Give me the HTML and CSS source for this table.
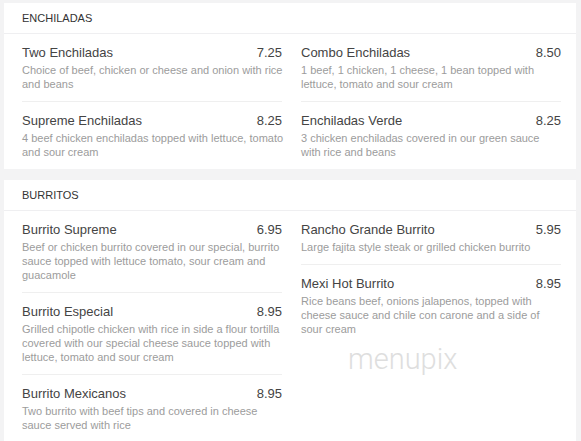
FILE: index.html
```html
<!DOCTYPE html>
<html>
<head>
<meta charset="utf-8">
<link rel="stylesheet" href="styles.css">
</head>
<body>
<div class="page">
  <section class="card">
    <div class="card-head">ENCHILADAS</div>
    <div class="cols">
      <div class="col col-left">
        <div class="item">
          <div class="row"><span class="name">Two Enchiladas</span><span class="price">7.25</span></div>
          <div class="desc">Choice of beef, chicken or cheese and onion with rice and beans</div>
        </div>
        <div class="item">
          <div class="row"><span class="name">Supreme Enchiladas</span><span class="price">8.25</span></div>
          <div class="desc">4 beef chicken enchiladas topped with lettuce, tomato and sour cream</div>
        </div>
      </div>
      <div class="col">
        <div class="item">
          <div class="row"><span class="name">Combo Enchiladas</span><span class="price">8.50</span></div>
          <div class="desc">1 beef, 1 chicken, 1 cheese, 1 bean topped with lettuce, tomato and sour cream</div>
        </div>
        <div class="item">
          <div class="row"><span class="name">Enchiladas Verde</span><span class="price">8.25</span></div>
          <div class="desc">3 chicken enchiladas covered in our green sauce with rice and beans</div>
        </div>
      </div>
    </div>
  </section>
  <section class="card card-last">
    <div class="card-head">BURRITOS</div>
    <div class="cols">
      <div class="col col-left">
        <div class="item">
          <div class="row"><span class="name">Burrito Supreme</span><span class="price">6.95</span></div>
          <div class="desc">Beef or chicken burrito covered in our special, burrito sauce topped with lettuce tomato, sour cream and guacamole</div>
        </div>
        <div class="item">
          <div class="row"><span class="name">Burrito Especial</span><span class="price">8.95</span></div>
          <div class="desc">Grilled chipotle chicken with rice in side a flour tortilla covered with our special cheese sauce topped with lettuce, tomato and sour cream</div>
        </div>
        <div class="item">
          <div class="row"><span class="name">Burrito Mexicanos</span><span class="price">8.95</span></div>
          <div class="desc">Two burrito with beef tips and covered in cheese sauce served with rice</div>
        </div>
      </div>
      <div class="col">
        <div class="item">
          <div class="row"><span class="name">Rancho Grande Burrito</span><span class="price">5.95</span></div>
          <div class="desc">Large fajita style steak or grilled chicken burrito</div>
        </div>
        <div class="item">
          <div class="row"><span class="name">Mexi Hot Burrito</span><span class="price">8.95</span></div>
          <div class="desc">Rice beans beef, onions jalapenos, topped with cheese sauce and chile con carone and a side of sour cream</div>
        </div>
      </div>
    </div>
    <div class="watermark">menupix</div>
  </section>
</div>
</body>
</html>
```
FILE: styles.css
```css
html, body {
  margin: 0;
  padding: 0;
  background: #f3f3f4;
  font-family: "Liberation Sans", Arial, sans-serif;
  color: #333;
}

.page {
  padding: 3px 5px 0 4px;
  display: flex;
  flex-direction: column;
  gap: 11px;
}

.card {
  background: #fff;
  position: relative;
}

.card-last {
  min-height: 270px;
}

.card-head {
  height: 30px;
  line-height: 30px;
  padding-left: 18px;
  font-size: 11px;
  color: #333;
  border-bottom: 1px solid #efeff1;
}

.cols {
  display: grid;
  grid-template-columns: 260px 260px;
  column-gap: 19px;
  padding: 0 15px 0 18px;
}

.item {
  padding: 10px 0 10px;
  border-bottom: 1px solid #efefef;
}

.item:last-child {
  border-bottom: none;
}

.row {
  display: flex;
  justify-content: space-between;
  align-items: baseline;
  font-size: 13px;
  line-height: 18px;
  color: #444;
}

.desc {
  margin-top: 1px;
  font-size: 11px;
  line-height: 14px;
  color: #9c9c9c;
}

.col-left .desc {
  margin-right: -4px;
}

.watermark {
  position: absolute;
  left: 344px;
  top: 164px;
  font-family: Roboto, "Liberation Sans", sans-serif;
  font-weight: 300;
  font-size: 29px;
  line-height: 30px;
  color: #dedede;
  pointer-events: none;
}
```
